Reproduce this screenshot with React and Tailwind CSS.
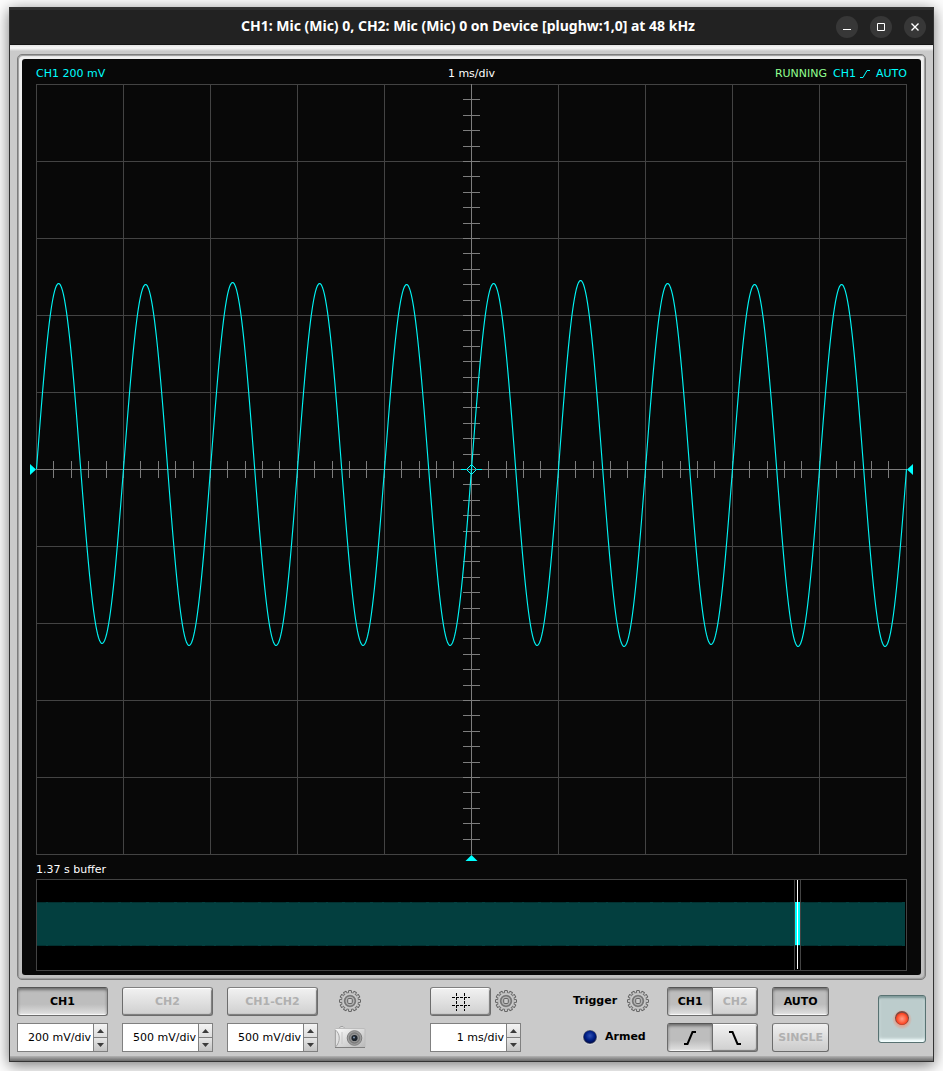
import React from "react";

const PLOT_LEFT = 7;
const DIV_W = 87;
const DIV_H = 77;
const PLOT_W = DIV_W * 10;
const PLOT_H = DIV_H * 10;
const CREST = [199, 200, 198, 199, 200, 199, 196, 199, 200, 200];
const TROUGH = [559, 561, 561, 561, 561, 561, 562, 560, 562, 562];
const MID = 380;

function tracePath() {
  const points = [];
  for (let x = 0; x <= PLOT_W; x += 1) {
    const cycle = Math.min(9, Math.floor(x / DIV_W));
    const s = Math.sin((x / DIV_W) * 2 * Math.PI - 0.025);
    const amp = s > 0 ? MID - CREST[cycle] : TROUGH[cycle] - MID;
    points.push(`${PLOT_LEFT + x + 0.5} ${(MID - amp * s + 0.5).toFixed(2)}`);
  }
  return "M" + points.join("L");
}

function gridPath() {
  let d = "";
  for (let i = 0; i <= 10; i += 1) {
    if (i === 5) continue;
    d += `M${PLOT_LEFT + i * DIV_W + 0.5} 0V${PLOT_H + 1}`;
    d += `M${PLOT_LEFT} ${i * DIV_H + 0.5}h${PLOT_W + 1}`;
  }
  return d;
}

function axisPath() {
  let d = `M${PLOT_LEFT + 435.5} 0V${PLOT_H + 1}M${PLOT_LEFT} 385.5h${PLOT_W + 1}`;
  for (let i = 1; i < 50; i += 1) {
    d += `M${PLOT_LEFT + Math.round(i * 17.4 - 0.1) + 0.5} 377v17`;
    d += `M${PLOT_LEFT + 427} ${Math.round(i * 15.4 - 0.1) + 0.5}h17`;
  }
  return d;
}

function ScopePlot() {
  return (
    <svg viewBox="0 0 885 778" className="block h-auto w-full" role="img" aria-label="Channel 1 waveform">
      <path d={gridPath()} stroke="#434343" fill="none" />
      <path d={axisPath()} stroke="#7d7d7d" fill="none" />
      <path d={tracePath()} stroke="#00f4f4" strokeWidth="1.15" fill="none" strokeLinejoin="round" />
      <path d="M432 385.5h5M448 385.5h5M437.5 385.5l5-5l5 5l-5 5z" stroke="#00ffff" fill="none" />
      <path d="M1 380v11l6-5.500z" fill="#00ffff" />
      <path d="M884 380v11l-6-5.500z" fill="#00ffff" />
      <path d="M436.500 777h12l-6-6z" fill="#00ffff" />
    </svg>
  );
}

function BufferOverview() {
  return (
    <svg viewBox="0 0 871 92" className="block h-auto w-full" role="img" aria-label="Capture buffer">
      <rect x="0.5" y="0.5" width="870" height="91" fill="#000" stroke="#434343" />
      <rect x="1" y="23" width="868" height="44" fill="#033f3f" />
      <path d="M1 23.500h868M1 66.500h868" stroke="#023030" strokeDasharray="9 2 14 3" />
      <path d="M758.500 1v90M764.500 1v90" stroke="#434343" />
      <rect x="759" y="23" width="5" height="43" fill="#00ffff" />
      <path d="M761.500 1v89" stroke="#fff" />
    </svg>
  );
}

const RAISED =
  "border border-[#6c6c6c] border-t-[#808080] bg-linear-to-b from-[#f2f2f2] to-[#cfcfcf] shadow-[inset_0_1px_0_#fff,inset_-1px_-1px_1px_#777]";
const FLAT =
  "border border-[#6c6c6c] border-t-[#808080] bg-linear-to-b from-[#f0f0f0] to-[#cbcbcb]";
const PRESSED =
  "border border-[#6c6c6c] border-t-[#555555] bg-linear-to-b from-[#bdbdbd] from-60% to-[#e2e2e2] shadow-[inset_0_2px_3px_#6e6e6e,inset_0_-1px_1px_#fff]";

function PushButton({ pressed, flat, disabled, className = "", children, ...rest }) {
  return (
    <button
      type="button"
      aria-pressed={!!pressed}
      disabled={disabled}
      className={`flex h-[29px] items-center justify-center pt-px text-[11px] font-bold ${
        pressed ? PRESSED : flat ? FLAT : RAISED
      } ${disabled ? "text-[#b0b0b0]" : "text-black"} ${className}`}
      {...rest}
    >
      {children}
    </button>
  );
}

function Spinner({ label, value }) {
  return (
    <div className="flex h-[29px] w-[91px] border border-[#808080] bg-white">
      <input
        aria-label={label}
        defaultValue={value}
        className="w-0 min-w-0 flex-1 bg-white pt-px pr-[2px] text-right text-[11px] text-black outline-none"
      />
      <div className="flex w-[14px] flex-col border-l border-[#808080]">
        <button
          type="button"
          aria-label={`Increase ${label}`}
          className="flex flex-1 items-center justify-center border-b border-[#808080] bg-linear-to-b from-[#f4f4f4] to-[#dddddd]"
        >
          <svg width="7" height="4" viewBox="0 0 7 4">
            <path d="M0 4h7L3.500 0z" fill="#3c3c3c" />
          </svg>
        </button>
        <button
          type="button"
          aria-label={`Decrease ${label}`}
          className="flex flex-1 items-center justify-center bg-linear-to-b from-[#e6e6e6] to-[#c4c4c4]"
        >
          <svg width="7" height="4" viewBox="0 0 7 4">
            <path d="M0 0h7L3.500 4z" fill="#3c3c3c" />
          </svg>
        </button>
      </div>
    </div>
  );
}

const TEETH = Array.from({ length: 12 }, (_, i) => i * 30);

function GearButton({ label }) {
  return (
    <button type="button" aria-label={label} className="flex size-[22px] items-center justify-center">
      <svg width="22" height="22" viewBox="0 0 22 22">
        {TEETH.map((a) => (
          <path
            key={a}
            d="M9.100 4L9.700 0.500h2.600L12.900 4z"
            transform={`rotate(${a} 11 11)`}
            fill="#c4c4c4"
            stroke="#5e5e5e"
            strokeWidth="0.900"
          />
        ))}
        <circle cx="11" cy="11" r="8.300" fill="#a9a9a9" />
        <circle cx="11" cy="11" r="7.100" fill="none" stroke="#cdcdcd" strokeWidth="1.200" />
        <circle cx="11" cy="11" r="5.300" fill="#a0a0a0" stroke="#757575" strokeWidth="1.600" />
        <circle cx="11" cy="11" r="3.900" fill="none" stroke="#b4b4b4" />
        <rect x="8.700" y="8.500" width="4.600" height="5" rx="1.200" fill="#cacaca" stroke="#666666" />
      </svg>
    </button>
  );
}

function CameraIcon() {
  return (
    <svg width="32" height="23" viewBox="0 0 32 23">
      <defs>
        <linearGradient id="cam-body" x1="0" y1="0" x2="1" y2="1">
          <stop offset="0" stopColor="#fafafa" />
          <stop offset="1" stopColor="#b9b9b9" />
        </linearGradient>
        <radialGradient id="cam-lens">
          <stop offset="0" stopColor="#4b4b4b" />
          <stop offset="0.500" stopColor="#777777" />
          <stop offset="1" stopColor="#acacac" />
        </radialGradient>
      </defs>
      <path d="M5.500 3V1.500l1.500-1h2l1 1V3z" fill="#dddddd" stroke="#a0a0a0" />
      <rect x="1" y="2.500" width="30" height="19" rx="1" fill="url(#cam-body)" stroke="#bcbcbc" />
      <path d="M1 21.500h30" stroke="#808080" />
      <path d="M1.500 4C6.500 8 6.500 16 1.500 21z" fill="#e2e2e2" stroke="#a6a6a6" />
      <path d="M8 6v12" stroke="#c8c8c8" />
      <circle cx="20.500" cy="12" r="7.300" fill="url(#cam-lens)" stroke="#7a7a7a" />
      <circle cx="20.500" cy="12" r="5" fill="#929292" stroke="#6a6a6a" strokeWidth="0.700" />
      <circle cx="20.500" cy="12" r="3.100" fill="#1d242c" />
      <circle cx="20" cy="11.500" r="0.900" fill="#8fa4c0" />
    </svg>
  );
}

function Edge({ falling }) {
  return (
    <svg width="14" height="14" viewBox="0 0 14 14" fill="none" stroke="currentColor" strokeWidth="2">
      <path d={falling ? "M1 1H4.500L9.500 13H13" : "M1 13H4.500L9.500 1H13"} />
    </svg>
  );
}

function TitleButton({ label, children }) {
  return (
    <button
      type="button"
      aria-label={label}
      className="flex size-[22px] items-center justify-center rounded-full bg-[#373737]"
    >
      <svg width="10" height="10" viewBox="0 0 10 10" fill="none" stroke="#ffffff">
        {children}
      </svg>
    </button>
  );
}

export default function App() {
  return (
    <div className="overflow-hidden bg-[#fdfdfd] px-[9px] pt-[7px] pb-[10px] font-['DejaVu_Sans',sans-serif] text-[11px]">
      <main className="border border-[#333333] bg-[#cacaca] shadow-[0_3px_14px_#00000088]">
        <header className="grid h-[37px] grid-cols-[1fr_auto_1fr] items-center border-t-2 border-b border-t-[#303030] border-b-[#151515] bg-[#222222] pr-[7px]">
          <h1 className="col-start-2 pb-[2px] font-['Noto_Sans',sans-serif] text-[14px] leading-5 font-bold text-white">
            CH1: Mic (Mic) 0, CH2: Mic (Mic) 0 on Device [plughw:1,0] at 48 kHz
          </h1>
          <div className="flex justify-end gap-3">
            <TitleButton label="Minimize">
              <path d="M1 7.500h8" />
            </TitleButton>
            <TitleButton label="Maximize">
              <path d="M1.500 1.500h7v7h-7z" />
            </TitleButton>
            <TitleButton label="Close">
              <path d="M1.500 1.500l7 7M8.500 1.500l-7 7" strokeWidth="1.400" />
            </TitleButton>
          </div>
        </header>

        <div className="h-[6px] bg-linear-to-b from-[#e4e4e4] via-[#f8f8f8] to-[#cccccc]" />

        <div className="px-[7px] pt-[3px]">
          <section className="rounded-[5px] border border-[#7c7c7c] bg-linear-to-b from-[#f0f0f0] to-[#c0c0c0] p-1 shadow-[inset_1px_1px_1px_#999999,inset_-1px_-1px_1px_#999999]">
            <div className="rounded-[3px] bg-[#080808] px-[7px] pb-1">
              <div className="grid h-[25px] grid-cols-3 items-center px-[7px] pt-[5px] text-[#00ffff]">
                <span>CH1 200 mV</span>
                <span className="text-center text-white">1 ms/div</span>
                <span className="flex items-center justify-end gap-[6px]">
                  <span className="text-[#90ff90]">RUNNING</span>
                  <span className="flex items-center gap-1">
                    CH1
                    <svg width="10" height="8" viewBox="0 0 10 8" fill="none" stroke="currentColor">
                      <path d="M0 7.500H3L7 0.500H10" />
                    </svg>
                  </span>
                  <span>AUTO</span>
                </span>
              </div>
              <ScopePlot />
              <div className="px-[7px]">
                <p className="h-[17px] leading-[16px] text-white">1.37 s buffer</p>
                <BufferOverview />
              </div>
            </div>
          </section>

          <div className="flex items-start pt-[7px]">
            <div className="grid grid-cols-3 gap-x-[14px] gap-y-[7px]">
              <PushButton pressed className="rounded-[3px]">CH1</PushButton>
              <PushButton disabled className="rounded-[3px]">CH2</PushButton>
              <PushButton disabled className="rounded-[3px]">CH1-CH2</PushButton>
              <Spinner label="CH1 scale" value="200 mV/div" />
              <Spinner label="CH2 scale" value="500 mV/div" />
              <Spinner label="CH1-CH2 scale" value="500 mV/div" />
            </div>
            <div className="ml-4 grid h-[65px] grid-rows-[27px_29px] place-items-center gap-y-[9px]">
              <GearButton label="Channel settings" />
              <button type="button" aria-label="Take snapshot">
                <CameraIcon />
              </button>
            </div>

            <div className="ml-16 flex flex-col gap-[7px]">
              <div className="flex h-[29px] items-start gap-1">
                <PushButton aria-label="Toggle grid" className="w-[61px] rounded-[3px]">
                  <svg width="18" height="18" viewBox="0 0 18 18" stroke="#000" fill="none" strokeDasharray="3 1">
                    <path d="M4.500 0v18M12.500 0v18M0 4.500h18M0 12.500h18" />
                  </svg>
                </PushButton>
                <div className="pt-[3px]">
                  <GearButton label="Time base settings" />
                </div>
              </div>
              <Spinner label="Time base" value="1 ms/div" />
            </div>

            <div className="ml-[52px] flex flex-col gap-[7px] font-bold">
              <div className="flex h-[28px] items-center gap-[10px]">
                <span className="pt-px">Trigger</span>
                <GearButton label="Trigger settings" />
              </div>
              <div className="flex h-[29px] items-center gap-[7px] pl-[9px]">
                <svg width="16" height="16" viewBox="0 0 16 16">
                  <defs>
                    <radialGradient id="led-blue" cx="0.500" cy="0.400" r="0.600">
                      <stop offset="0" stopColor="#2f50b4" />
                      <stop offset="0.600" stopColor="#001f86" />
                      <stop offset="1" stopColor="#000a48" />
                    </radialGradient>
                  </defs>
                  <circle cx="8" cy="8.500" r="7.500" fill="#dedede" />
                  <circle cx="8" cy="8" r="7" fill="#555b70" />
                  <circle cx="8" cy="8" r="6.200" fill="url(#led-blue)" />
                </svg>
                <span className="pt-[2px]">Armed</span>
              </div>
            </div>

            <div className="ml-[18px] flex flex-col gap-[7px]">
              <div className="flex">
                <PushButton pressed className="w-[46px] rounded-l-[3px]">CH1</PushButton>
                <PushButton disabled className="w-[45px] rounded-r-[3px] border-l-0">CH2</PushButton>
              </div>
              <div className="flex">
                <PushButton pressed aria-label="Rising edge" className="w-[46px] rounded-l-[3px]">
                  <Edge />
                </PushButton>
                <PushButton aria-label="Falling edge" className="w-[45px] rounded-r-[3px] border-l-0">
                  <Edge falling />
                </PushButton>
              </div>
            </div>

            <div className="ml-[14px] flex w-[57px] flex-col gap-[7px]">
              <PushButton pressed className="rounded-[3px]">AUTO</PushButton>
              <PushButton flat disabled className="rounded-[3px]">SINGLE</PushButton>
            </div>

            <button
              type="button"
              aria-label="Run"
              aria-pressed="true"
              className="mt-2 ml-auto flex size-12 items-center justify-center rounded-[3px] border border-[#587272] bg-[#bccccc] shadow-[inset_0_2px_2px_#7f9999,inset_0_-3px_3px_#f4ffff]"
            >
              <svg width="24" height="24" viewBox="0 0 24 24">
                <defs>
                  <radialGradient id="led-glow">
                    <stop offset="0.500" stopColor="#ff8060" stopOpacity="0.700" />
                    <stop offset="1" stopColor="#ff8060" stopOpacity="0" />
                  </radialGradient>
                  <radialGradient id="led-red">
                    <stop offset="0" stopColor="#ff9a88" />
                    <stop offset="0.500" stopColor="#ff7050" />
                    <stop offset="1" stopColor="#f83a18" />
                  </radialGradient>
                </defs>
                <circle cx="12" cy="12.500" r="10" fill="url(#led-glow)" />
                <circle cx="12" cy="11" r="7" fill="#7d4a42" />
                <circle cx="12" cy="11.800" r="6" fill="url(#led-red)" />
              </svg>
            </button>
          </div>
        </div>
        <div className="mt-[4px] h-[5px] bg-linear-to-b from-[#b4b4b4] to-[#6a6a6a]" />
      </main>
    </div>
  );
}
